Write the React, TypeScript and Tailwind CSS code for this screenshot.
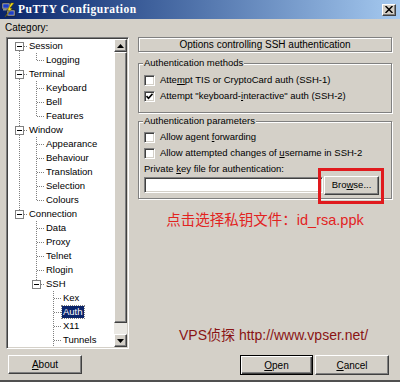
import React from 'react';

type Guide = 'I' | 'T' | 'L' | ' ' | 'bF' | 'bM' | 'bE';

const rows: { label: string; g: Guide[]; sel?: boolean }[] = [
  { label: 'Session', g: ['bF'] },
  { label: 'Logging', g: ['I', 'L'] },
  { label: 'Terminal', g: ['bM'] },
  { label: 'Keyboard', g: ['I', 'T'] },
  { label: 'Bell', g: ['I', 'T'] },
  { label: 'Features', g: ['I', 'L'] },
  { label: 'Window', g: ['bM'] },
  { label: 'Appearance', g: ['I', 'T'] },
  { label: 'Behaviour', g: ['I', 'T'] },
  { label: 'Translation', g: ['I', 'T'] },
  { label: 'Selection', g: ['I', 'T'] },
  { label: 'Colours', g: ['I', 'L'] },
  { label: 'Connection', g: ['bE'] },
  { label: 'Data', g: [' ', 'T'] },
  { label: 'Proxy', g: [' ', 'T'] },
  { label: 'Telnet', g: [' ', 'T'] },
  { label: 'Rlogin', g: [' ', 'T'] },
  { label: 'SSH', g: [' ', 'bE'] },
  { label: 'Kex', g: [' ', ' ', 'T'] },
  { label: 'Auth', g: [' ', ' ', 'T'], sel: true },
  { label: 'X11', g: [' ', ' ', 'T'] },
  { label: 'Tunnels', g: [' ', ' ', 'T'] },
];

const dot = { stroke: '#808080', strokeWidth: 1, strokeDasharray: '1 1' };

// one 17x14 column of the tree's dotted connector lines
const GuideCell = ({ kind }: { kind: Guide }) => {
  const box = kind.startsWith('b');
  return (
    <svg width="17" height="14" viewBox="0 0 17 14" className="shrink-0">
      {kind === 'I' && <line x1="8.5" y1="0" x2="8.5" y2="14" {...dot} />}
      {kind === 'T' && <line x1="8.5" y1="0" x2="8.5" y2="14" {...dot} />}
      {kind === 'L' && <line x1="8.5" y1="0" x2="8.5" y2="7.5" {...dot} />}
      {(kind === 'T' || kind === 'L') && <line x1="9" y1="7.5" x2="17" y2="7.5" {...dot} />}
      {box && (
        <>
          {(kind === 'bM' || kind === 'bE') && <line x1="8.5" y1="0" x2="8.5" y2="3" {...dot} />}
          {(kind === 'bF' || kind === 'bM') && <line x1="8.5" y1="12" x2="8.5" y2="14" {...dot} />}
          <line x1="13" y1="7.5" x2="17" y2="7.5" {...dot} />
          <rect x="4.5" y="3.5" width="8" height="8" fill="white" stroke="#808080" />
          <line x1="6" y1="7.5" x2="11" y2="7.5" stroke="black" />
        </>
      )}
    </svg>
  );
};

const raised =
  'bg-[#d4d0c8] border border-t-white border-l-white border-r-[#404040] border-b-[#404040] shadow-[inset_-1px_-1px_0_#808080]';

const Arrow = ({ up }: { up?: boolean }) => (
  <div className={`${raised} h-[13px] flex items-center justify-center shrink-0`}>
    <svg width="7" height="4" viewBox="0 0 7 4">
      <path d={up ? 'M3.5 0 L7 4 L0 4 Z' : 'M0 0 L7 0 L3.5 4 Z'} fill="black" />
    </svg>
  </div>
);

const Check = ({ checked }: { checked?: boolean }) => (
  <span className="w-[11px] h-[11px] shrink-0 bg-white border border-t-[#808080] border-l-[#808080] border-b-white border-r-white shadow-[inset_1px_1px_0_#404040,inset_-1px_-1px_0_#d4d0c8] flex items-center justify-center">
    {checked && (
      <svg width="7" height="7" viewBox="0 0 7 7">
        <path d="M0.5 3 L2.5 5.2 L6.5 0.8" stroke="black" strokeWidth="1.6" fill="none" />
      </svg>
    )}
  </span>
);

const etched = 'border border-[#808080] shadow-[inset_1px_1px_0_#fff,1px_1px_0_#fff]';

const CheckRow = ({ checked, children }: { checked?: boolean; children: React.ReactNode }) => (
  <div className="h-[16px] flex items-center gap-[5px]">
    <Check checked={checked} />
    <span>{children}</span>
  </div>
);

const PuttyIcon = () => (
  <svg width="16" height="16" viewBox="0 0 16 16">
    <rect x="1" y="1" width="8" height="6" fill="#c0c0c0" stroke="#202020" strokeWidth="0.8" />
    <rect x="2.2" y="2.2" width="5.6" height="3.6" fill="#1c3ec8" />
    <rect x="2" y="7" width="6" height="1.5" fill="#909090" />
    <rect x="6" y="8" width="8" height="6" fill="#c0c0c0" stroke="#202020" strokeWidth="0.8" />
    <rect x="7.2" y="9.2" width="5.6" height="3.6" fill="#1c3ec8" />
    <path d="M13 1 L9 6 L11 6.5 L4 15 L8.5 8.5 L6.5 8 L10 1 Z" fill="#f4e020" stroke="#6a5a00" strokeWidth="0.5" />
  </svg>
);

export default function App() {
  return (
    <div className="w-[400px] h-[382px] bg-[#d4d0c8] flex flex-col font-['Liberation_Sans',sans-serif] text-[9.5px] text-black overflow-hidden border-b-2 border-b-[#505050]">
      {/* title bar */}
      <div className="h-[19px] shrink-0 flex items-center bg-gradient-to-r from-[#0a246a] to-[#a6caf0] pl-[1px] pr-[4px]">
        <PuttyIcon />
        <span className="ml-[1px] text-white font-bold text-[11.5px] tracking-[0.5px] font-['Liberation_Serif',serif]">
          PuTTY Configuration
        </span>
        <div className={`${raised} ml-auto w-[14px] h-[12px] flex items-center justify-center`}>
          <svg width="8" height="7" viewBox="0 0 8 7">
            <path d="M0.5 0 L7.5 7 M7.5 0 L0.5 7" stroke="black" strokeWidth="1.5" />
          </svg>
        </div>
      </div>

      <div className="flex h-[330px] shrink-0">
        {/* category tree */}
        <div className="pl-[5px] w-[129px] flex flex-col">
          <div className="h-[12px] leading-[12px] mt-[3px] text-[10px]">Category:</div>
          <div className="ml-[1px] mt-[3px] h-[312px] bg-white flex border border-t-[#808080] border-l-[#808080] border-b-white border-r-white shadow-[inset_1px_1px_0_#404040,inset_-1px_-1px_0_#d4d0c8]">
            <div className="flex-1 overflow-hidden pl-[4px] pt-[1px]">
              {rows.map((r) => (
                <div key={r.label} className="flex items-center h-[14px]">
                  {r.g.map((k, i) => (
                    <GuideCell key={i} kind={k} />
                  ))}
                  <span
                    className={
                      r.sel
                        ? 'bg-[#0a246a] text-white px-[1px] h-[12px] leading-[12px] outline outline-1 outline-dotted outline-[#808080]'
                        : 'pl-[1px] leading-[14px] whitespace-nowrap'
                    }
                  >
                    {r.label}
                  </span>
                </div>
              ))}
            </div>
            <div className="w-[13px] flex flex-col my-[1px] mr-[1px]">
              <Arrow up />
              <div className={`${raised} h-[271px] shrink-0`} />
              <div className="flex-1 bg-[#ebe9e4]" />
              <Arrow />
            </div>
          </div>
        </div>

        {/* right panel */}
        <div className="ml-[9px] w-[254px] flex flex-col pt-[18px]">
          <div className={`${etched} h-[15px] flex items-center justify-center text-[10px]`}>
            Options controlling SSH authentication
          </div>

          <div className={`${etched} mt-[11px] pl-[5px] pb-[8px] flex flex-col`}>
            <span className="-mt-[7px] ml-[-1px] px-[1px] w-fit bg-[#d4d0c8] h-[12px] leading-[12px]">
              Authentication methods
            </span>
            <div className="mt-[3px]">
              <CheckRow>
                Atte<u>m</u>pt TIS or CryptoCard auth (SSH-1)
              </CheckRow>
              <CheckRow checked>
                Attempt "keyboard-<u>i</u>nteractive" auth (SSH-2)
              </CheckRow>
            </div>
          </div>

          <div className={`${etched} mt-[8px] pl-[5px] pb-[3px] flex flex-col`}>
            <span className="-mt-[7px] ml-[-1px] px-[1px] w-fit bg-[#d4d0c8] h-[12px] leading-[12px]">
              Authentication parameters
            </span>
            <div className="mt-[2px]">
              <CheckRow>
                Allow agent <u>f</u>orwarding
              </CheckRow>
              <CheckRow>
                Allow attempted changes of <u>u</u>sername in SSH-2
              </CheckRow>
            </div>
            <div className="mt-[2px] h-[12px] leading-[12px]">
              Private <u>k</u>ey file for authentication:
            </div>
            <div className="h-[20px] flex items-center">
              <div className="w-[179px] h-[16px] bg-white border border-t-[#808080] border-l-[#808080] border-b-white border-r-white shadow-[inset_1px_1px_0_#404040,inset_-1px_-1px_0_#d4d0c8]" />
              <div className="relative ml-[1px]">
                <div className={`${raised} w-[55px] h-[19px] flex items-center justify-center`}>
                  Bro<u>w</u>se...
                </div>
                <div className="absolute -left-[6px] -right-[5px] -top-[8px] -bottom-[9px] border-[3px] border-[#e01a1e]" />
              </div>
            </div>
          </div>

          <div className="mt-[11px] h-[20px] leading-[20px] text-center text-[14.5px] text-[#e2231f] font-['Liberation_Sans','Noto_Sans_CJK_SC',sans-serif]">
            点击选择私钥文件：id_rsa.ppk
          </div>

          <div className="mt-auto mb-[4px] h-[20px] leading-[20px] pl-[41px] text-[14px] text-[#8a1414] font-['Liberation_Sans','Noto_Sans_CJK_SC',sans-serif]">
            VPS侦探 http://www.vpser.net/
          </div>
        </div>
      </div>

      {/* buttons */}
      <div className="flex mt-[6px] pl-[8px] pr-[11px] text-[10px]">
        <div className={`${raised} w-[74px] h-[19px] flex items-center justify-center`}>
          <span>
            <u>A</u>bout
          </span>
        </div>
        <div className="ml-auto w-[73px] h-[20px] border border-black bg-[#d4d0c8] shadow-[inset_1px_1px_0_#fff,inset_-1px_-1px_0_#404040,inset_-2px_-2px_0_#808080] flex items-center justify-center">
          <span>
            <u>O</u>pen
          </span>
        </div>
        <div className={`${raised} ml-[2px] w-[74px] h-[20px] flex items-center justify-center`}>
          <span>
            <u>C</u>ancel
          </span>
        </div>
      </div>
    </div>
  );
}
